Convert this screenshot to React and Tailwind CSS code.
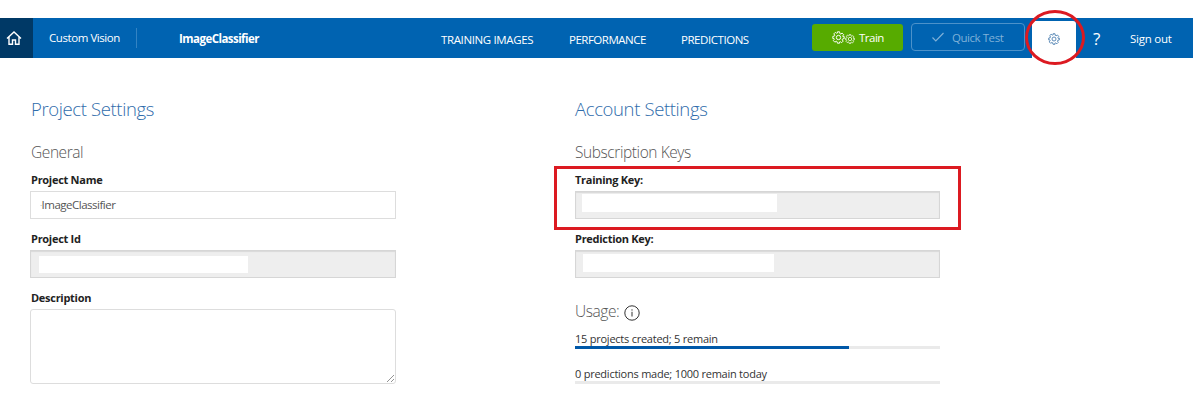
function Gear({ className }) {
  return (
    <svg viewBox="0 0 24 24" className={className} fill="none" stroke="currentColor" strokeWidth="1.8" strokeLinejoin="round">
      <path d="M10 1.500h4l.6 3.400 1.600.7 2.500-1.700 2.800 2.800-1.700 2.500.7 1.600L22.500 10v4l-2.900.600-.7 1.600 1.700 2.500-2.800 2.800-2.500-1.700-1.600.7L14 22.500h-4l-.6-2.900-1.600-.7-2.500 1.700-2.800-2.800 1.700-2.500-.7-1.600L1.500 14v-4l2.900-.6.7-1.600-1.700-2.500 2.800-2.800 2.500 1.700 1.600-.7z" />
      <circle cx="12" cy="12" r="4" />
    </svg>
  );
}

function Title({ children, className }) {
  return <h1 className={`h-7 text-[18.500px] leading-7 font-light tracking-[-0.37px] whitespace-nowrap text-[#2f6cab] ${className}`}>{children}</h1>;
}

function Subtitle({ children, className }) {
  return <h2 className={`h-5 text-[15.500px] leading-5 font-light tracking-[-0.42px] whitespace-nowrap text-[#555] ${className}`}>{children}</h2>;
}

function Label({ children, className }) {
  return <div className={`h-[15px] text-[11px] leading-[16px] font-bold tracking-[-0.28px] whitespace-nowrap text-[#222] ${className}`}>{children}</div>;
}

function KeyBox({ className, mask }) {
  return (
    <div className={`mt-[4px] flex border border-[#d6d6d6] bg-[#eee] shadow-[inset_0_1px_1px_#d9d9d9] ${className}`}>
      <div className={`bg-white ${mask}`} />
    </div>
  );
}

function Usage({ children, className, bar }) {
  return (
    <div className={className}>
      <div className="h-[15px] text-[11px] leading-[16px] tracking-[-0.24px] whitespace-nowrap text-[#333]">{children}</div>
      <div className="h-[3px] bg-[#eaeaea]"><div className={`h-[3px] bg-[#0058a8] ${bar}`} /></div>
    </div>
  );
}

export default function App() {
  return (
    <div className="relative h-[410px] w-[1193px] overflow-hidden bg-white pt-[18px] font-['Open_Sans','Noto_Sans',sans-serif]">
      <header className="flex h-10 items-start bg-[#0063b1] text-[11.5px] leading-4 whitespace-nowrap text-white">
        <div className="flex h-10 w-[33px] shrink-0 items-center bg-[#003966] pl-[6px]">
          <svg viewBox="0 0 16 16" className="size-4" fill="none" stroke="currentColor" strokeWidth="1.4">
            <path d="M1 8.500 8 2l7 6.500M3 7v7.300h3.500V10h3v4.300H13V7" />
          </svg>
        </div>
        <div className="mt-3 ml-4 w-[87px] shrink-0 tracking-[-0.43px]">Custom Vision</div>
        <div className="mt-[10px] h-5 w-px shrink-0 bg-[#3383c3]" />
        <div className="mt-[13px] ml-[42px] w-[262px] shrink-0 font-bold tracking-[-0.54px]">ImageClassifier</div>
        <nav className="mt-[14px] flex">
          <div className="w-[128px] tracking-[-0.37px]">TRAINING IMAGES</div>
          <div className="w-[112px] tracking-[-0.5px]">PERFORMANCE</div>
          <div className="w-[131px] tracking-[-0.45px]">PREDICTIONS</div>
        </nav>
        <button className="mt-[6px] flex h-[27px] w-[91px] shrink-0 items-center rounded-[3px] bg-[#57ab00] pl-5">
          <Gear className="size-[13px]" />
          <Gear className="mt-[2px] size-[10px]" />
          <span className="mt-px ml-[4px] tracking-[-0.5px]">Train</span>
        </button>
        <button className="mt-[5px] ml-2 flex h-7 w-[114px] shrink-0 items-center rounded-[4px] border border-[#4c92ca] pl-5 text-[#7fb1d8]">
          <svg viewBox="0 0 12 12" className="size-3" fill="none" stroke="currentColor" strokeWidth="1.2"><path d="m.5 6.500 3.300 3.300L11.500 2" /></svg>
          <span className="mt-[2px] ml-2 tracking-[-0.45px]">Quick Test</span>
        </button>
        <div className="mt-[3px] ml-[7px] flex h-[37px] w-11 shrink-0 items-center justify-center rounded-t-[3px] bg-white text-[#4c7fb0]">
          <Gear className="mb-px size-3" />
        </div>
        <div className="mt-[11px] ml-[17px] w-[37px] shrink-0 text-[17px] leading-[20px]">?</div>
        <div className="mt-[13px] tracking-[-0.25px]">Sign out</div>
      </header>

      <main className="flex">
        <section className="ml-[30px] w-[366px] shrink-0 pt-[37px]">
          <Title className="ml-px">Project Settings</Title>
          <Subtitle className="mt-[19px] ml-px">General</Subtitle>
          <Label className="mt-[10px] ml-px">Project Name</Label>
          <div className="mt-[4px] flex h-[28px] items-center border border-[#ddd] pl-[9px] text-[11.5px] tracking-[-0.5px] text-[#555]"><span className="text-[8px] text-[#999]">·</span>ImageClassifier</div>
          <Label className="mt-[12px] ml-px">Project Id</Label>
          <KeyBox className="h-7 pt-[5px] pl-2" mask="h-[17px] w-[209px]" />
          <Label className="mt-[12px] ml-px">Description</Label>
          <div className="mt-[4px] flex h-[75px] items-end justify-end rounded-[3px] border border-[#ddd] p-px">
            <svg viewBox="0 0 7 7" className="size-[7px]" stroke="#777" strokeWidth=".8"><path d="M0 7 7 0M4 7l3-3" /></svg>
          </div>
        </section>

        <section className="ml-[179px] w-[365px] shrink-0 pt-[37px]">
          <Title>Account Settings</Title>
          <Subtitle className="mt-[19px]">Subscription Keys</Subtitle>
          <Label className="mt-[10px]">Training Key:</Label>
          <KeyBox className="h-7 pt-[2px] pl-[6px]" mask="h-[18px] w-[195px]" />
          <Label className="mt-[12px]">Prediction Key:</Label>
          <KeyBox className="h-7 pt-[3px] pl-[7px]" mask="h-[18px] w-[191px]" />
          <div className="mt-[23px] flex h-5 items-center">
            <Subtitle className="w-[49px]">Usage:</Subtitle>
            <svg viewBox="0 0 16 16" className="mt-[3px] size-4" fill="none" stroke="#333" strokeWidth="1"><circle cx="8" cy="8" r="7.200" /><path d="M8 6.800v4.700M8 4.300v1.300" /></svg>
          </div>
          <Usage className="mt-[10px]" bar="w-[75%]">15 projects created; 5 remain</Usage>
          <Usage className="mt-[17px]" bar="w-0">0 predictions made; 1000 remain today</Usage>
        </section>
      </main>

      <div className="absolute top-[166px] left-[554px] h-[64px] w-[407px] border-[3px] border-[#dc1a21]" />
      <div className="absolute top-[10px] left-[1025px] h-[55px] w-[60px] rounded-[50%] border-[3px] border-[#dc1a21]" />
    </div>
  );
}
